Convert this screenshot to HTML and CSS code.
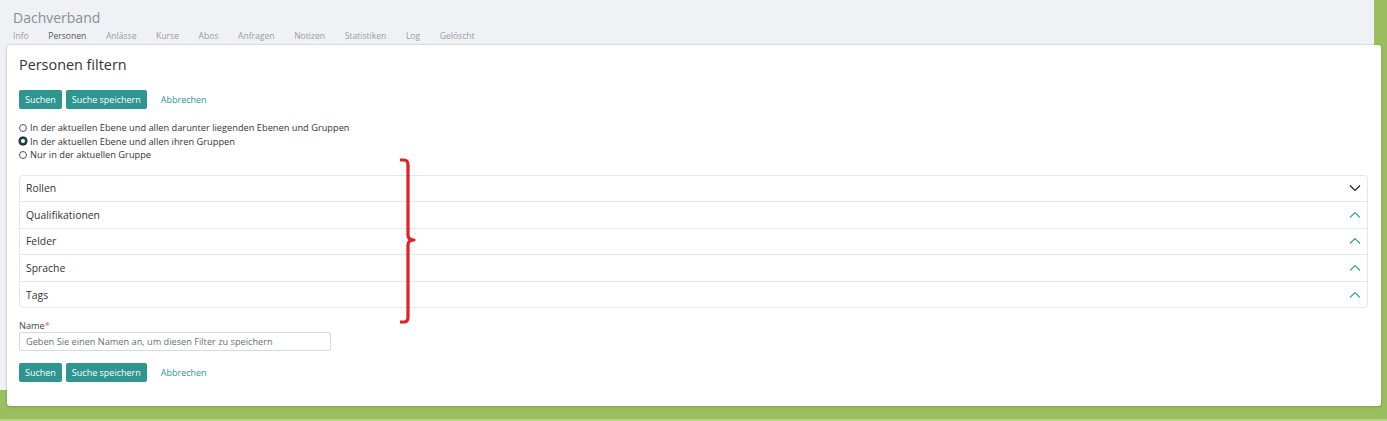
FILE: index.html
```html
<!DOCTYPE html>
<html lang="de">
<head>
<meta charset="utf-8">
<link rel="stylesheet" href="styles.css">
</head>
<body>
<div class="page">
  <div class="panel">
    <h1 class="org">Dachverband</h1>
    <nav class="tabs">
      <span>Info</span>
      <span class="active">Personen</span>
      <span>Anlässe</span>
      <span>Kurse</span>
      <span>Abos</span>
      <span>Anfragen</span>
      <span>Notizen</span>
      <span>Statistiken</span>
      <span>Log</span>
      <span>Gelöscht</span>
    </nav>
  </div>
  <div class="modal">
    <h2 class="title">Personen filtern</h2>
    <div class="actions">
      <button class="btn">Suchen</button>
      <button class="btn">Suche speichern</button>
      <a class="link">Abbrechen</a>
    </div>
    <div class="radios">
      <label class="radio"><span class="dot"></span>In der aktuellen Ebene und allen darunter liegenden Ebenen und Gruppen</label>
      <label class="radio"><span class="dot on"></span>In der aktuellen Ebene und allen ihren Gruppen</label>
      <label class="radio"><span class="dot"></span>Nur in der aktuellen Gruppe</label>
    </div>
    <div class="acc-wrap">
      <div class="accordion">
        <div class="item"><span>Rollen</span>
          <svg class="chev" width="12" height="8" viewBox="0 0 12 8"><path d="M1 1.5 L6 6.5 L11 1.5" fill="none" stroke="#222" stroke-width="1.2"/></svg>
        </div>
        <div class="item"><span>Qualifikationen</span>
          <svg class="chev" width="12" height="8" viewBox="0 0 12 8"><path d="M1 6.5 L6 1.5 L11 6.5" fill="none" stroke="#3a9c97" stroke-width="1.1"/></svg>
        </div>
        <div class="item"><span>Felder</span>
          <svg class="chev" width="12" height="8" viewBox="0 0 12 8"><path d="M1 6.5 L6 1.5 L11 6.5" fill="none" stroke="#3a9c97" stroke-width="1.1"/></svg>
        </div>
        <div class="item"><span>Sprache</span>
          <svg class="chev" width="12" height="8" viewBox="0 0 12 8"><path d="M1 6.5 L6 1.5 L11 6.5" fill="none" stroke="#3a9c97" stroke-width="1.1"/></svg>
        </div>
        <div class="item"><span>Tags</span>
          <svg class="chev" width="12" height="8" viewBox="0 0 12 8"><path d="M1 6.5 L6 1.5 L11 6.5" fill="none" stroke="#3a9c97" stroke-width="1.1"/></svg>
        </div>
      </div>
      <svg class="brace" width="24" height="168" viewBox="0 0 24 168"><path d="M2 3 H6 Q10 3 10 8 V78 Q10 83 16 83 Q10 83 10 88 V160 Q10 165 6 165 H2" fill="none" stroke="#e01f26" stroke-width="3.2" stroke-linejoin="round"/></svg>
    </div>
    <div class="field">
      <label class="label">Name<span class="req">*</span></label>
      <input class="input" type="text" placeholder="Geben Sie einen Namen an, um diesen Filter zu speichern">
    </div>
    <div class="actions">
      <button class="btn">Suchen</button>
      <button class="btn">Suche speichern</button>
      <a class="link">Abbrechen</a>
    </div>
  </div>
</div>
</body>
</html>
```

FILE: styles.css
```css
html, body {
  margin: 0;
  padding: 0;
}
body {
  background: #9bbe5e;
  font-family: "Open Sans", "Noto Sans", sans-serif;
  width: 1387px;
  height: 421px;
  overflow: hidden;
  position: relative;
}
.page {
  position: relative;
  height: 421px;
  box-shadow: inset 0 -2px 0 #b7d28a;
}
.panel {
  width: 1374px;
  height: 390px;
  background: #f0f1f5;
  padding: 8px 0 0 13px;
  box-sizing: border-box;
}
.org {
  margin: 0;
  font-size: 14px;
  font-weight: 400;
  color: #8a8d93;
  line-height: 20px;
}
.tabs {
  display: flex;
  gap: 19.5px;
  font-size: 8.6px;
  color: #9a9ca1;
  line-height: 12px;
  margin-top: 2px;
}
.tabs .active {
  color: #555;
}
.modal {
  position: absolute;
  left: 7px;
  top: 45px;
  width: 1374px;
  height: 361px;
  box-sizing: border-box;
  background: #fff;
  border-radius: 3px;
  box-shadow: 0 0 2px rgba(120, 150, 90, 0.6), 0 1px 3px rgba(0,0,0,0.15);
  padding: 9px 13px 0 12px;
}
.title {
  margin: 0;
  font-size: 14.4px;
  font-weight: 400;
  color: #333;
  line-height: 22px;
}
.actions {
  display: flex;
  align-items: center;
  gap: 4px;
  margin-top: 14px;
}
.btn {
  font-family: inherit;
  font-size: 9px;
  color: #fff;
  background: #2f9591;
  border: none;
  border-radius: 2px;
  height: 19px;
  padding: 0 6px;
  line-height: 19px;
}
.link {
  font-size: 9px;
  color: #2f9591;
  margin-left: 10px;
}
.radios {
  display: flex;
  flex-direction: column;
  margin-top: 12px;
}
.radio {
  display: flex;
  align-items: center;
  font-size: 9.25px;
  color: #333;
  line-height: 13.5px;
}
.dot {
  width: 6px;
  height: 6px;
  border: 1px solid #555;
  border-radius: 50%;
  margin-right: 3px;
  box-sizing: content-box;
}
.dot.on {
  border: 2px solid #1a4a48;
  width: 4px;
  height: 4px;
  background: #fff;
  box-shadow: 0 0 0 0.5px #000;
}
.acc-wrap {
  position: relative;
  margin-top: 13px;
}
.accordion {
  border: 1px solid #e6e7ea;
  border-radius: 4px;
}
.item {
  display: flex;
  align-items: center;
  justify-content: space-between;
  height: 25.6px;
  padding: 0 6px 0 6px;
  font-size: 10.4px;
  color: #333;
  border-top: 1px solid #e6e7ea;
}
.item:first-child {
  border-top: none;
}
.brace {
  position: absolute;
  left: 379px;
  top: -18px;
}
.field {
  margin-top: 12px;
}
.label {
  display: block;
  font-size: 9.2px;
  color: #444;
  line-height: 12px;
}
.req {
  color: #e06a50;
}
.input {
  display: block;
  width: 312px;
  height: 19px;
  box-sizing: border-box;
  border: 1px solid #d6d8dc;
  border-radius: 2px;
  padding: 0 6px;
  font-family: inherit;
  font-size: 9.2px;
  color: #333;
  margin-top: 0;
}
.input::placeholder {
  color: #6b6e73;
}
.field + .actions {
  margin-top: 12px;
}
```
